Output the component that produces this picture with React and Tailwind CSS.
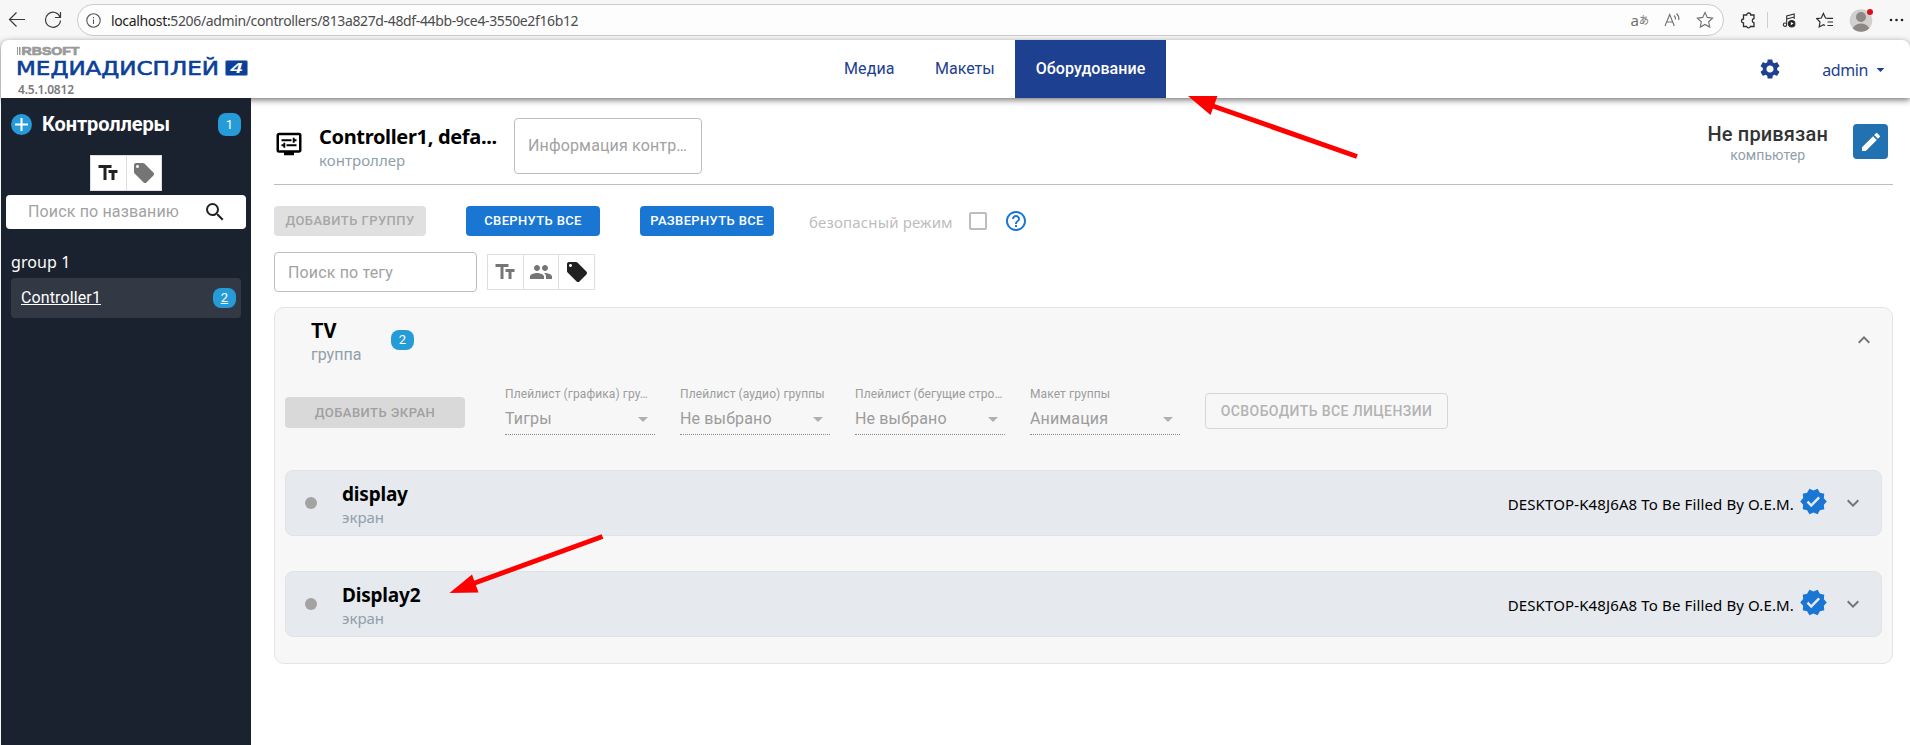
import { useState } from 'react'
import {
  MdTextFields, MdLocalOffer, MdPeople, MdSearch, MdHelpOutline, MdDisplaySettings,
  MdVerified, MdExpandMore, MdExpandLess, MdEdit, MdSettings, MdArrowDropDown,
} from 'react-icons/md'

const SEGOE = "font-['Noto_Sans','Open_Sans',sans-serif]"

const SCREENS = [
  { id: 1, name: 'display', pc: 'DESKTOP-K48J6A8 To Be Filled By O.E.M.' },
  { id: 2, name: 'Display2', pc: 'DESKTOP-K48J6A8 To Be Filled By O.E.M.' },
]

const SELECTS = [
  { label: 'Плейлист (графика) гру…', value: 'Тигры' },
  { label: 'Плейлист (аудио) группы', value: 'Не выбрано' },
  { label: 'Плейлист (бегущие стро…', value: 'Не выбрано' },
  { label: 'Макет группы', value: 'Анимация' },
]

function BrowserBar() {
  return (
    <div className={`h-10 shrink-0 bg-[#f7f7f7] flex items-start pt-1 text-[#3b3b3b] ${SEGOE}`}>
      <svg className="ml-2 mt-[7px] shrink-0" width="18" height="18" fill="none" stroke="currentColor" strokeWidth="1.2">
        <path d="M17 8.500H1.500M8.500 1.500 1.500 8.500l7 7" />
      </svg>
      <svg className="ml-[18px] mt-[7px] shrink-0" width="18" height="18" fill="none" stroke="currentColor" strokeWidth="1.2">
        <path d="M16.200 6.500A7.500 7.500 0 1 0 16.500 9.500M16.500 1v5.500h-5.500" />
      </svg>
      <div className="ml-[15px] w-[1647px] h-8 shrink-0 rounded-full border border-[#cbcbcb] bg-[#fdfdfd] flex items-center">
        <svg className="ml-2 shrink-0" width="15" height="15" fill="none" stroke="#555" strokeWidth="1.1">
          <circle cx="7.500" cy="7.500" r="6.700" />
          <path d="M7.500 6.500v4.500M7.500 4v1.300" />
        </svg>
        <span className="ml-2.5 text-[14px] tracking-[-0.36px] whitespace-nowrap">
          <span className="text-[#1c1c1c]">localhost:</span>
          <span className="text-[#4c4c4c]">5206/admin/controllers/813a827d-48df-44bb-9ce4-3550e2f16b12</span>
        </span>
        <span className="ml-auto mr-[13px] flex items-center text-[#707070]">
          <span className="text-[15px] leading-4">a</span>
          <span className="text-[10px] leading-4 font-['Noto_Sans_CJK_JP',sans-serif]">あ</span>
          <svg className="ml-[15px]" width="17" height="16" fill="none" stroke="currentColor" strokeWidth="1.1">
            <path d="M1 14 5.700 2.500 10.300 14M2.800 10h5.800M10 3.500q1.800 1.800 1.500 4M12.500 1.500q3 3 2.300 6.500" />
          </svg>
          <svg className="ml-[15px] -mr-1" width="18" height="18" fill="none" stroke="currentColor" strokeWidth="1.1">
            <path d="m9 1.500 2.300 4.900 5.300.7-3.900 3.700 1 5.300L9 13.500l-4.700 2.600 1-5.300L1.400 7.100l5.300-.7z" />
          </svg>
        </span>
      </div>
      <svg className="ml-4 mt-2 shrink-0" width="18" height="18" fill="none" stroke="#303030" strokeWidth="1.3">
        <path d="M3.500 3h3.200a2 2 0 0 1 4 0H14v3.500a2.200 2.200 0 0 0 0 4.300V14.500h-3.600a2 2 0 0 1-3.800 0H3.500v-3.500a2 2 0 0 1 0-4z" />
      </svg>
      <span className="ml-[9px] mt-2 h-4 w-px bg-[#cfcfcf]" />
      <svg className="ml-[14px] mt-2 shrink-0" width="17" height="17" fill="none" stroke="#303030" strokeWidth="1.1">
        <circle cx="3" cy="12.700" r="1.700" />
        <path d="M4.700 12.500V4l7.500-2v5M4.700 7l7.500-2" />
        <circle cx="9.700" cy="11.700" r="3.200" fill="#222" />
        <path d="m8.800 9.900 2.800 1.700-2.800 1.700z" fill="#fff" stroke="none" />
      </svg>
      <svg className="ml-[17px] mt-2 shrink-0" width="18" height="17" fill="none" stroke="#303030" strokeWidth="1.200">
        <path d="M12 6.300 9.500 6 7.400 1.500 5.300 6 .8 6.600 4 10l-.8 5 4.200-2.300 1.600.8M11 6.300h6M11.500 10h5.500M11.500 13.500h5.500" />
      </svg>
      <svg className="ml-[15px] mt-[3px] shrink-0" width="26" height="26">
        <defs>
          <clipPath id="avatar"><circle cx="12" cy="13.500" r="11.300" /></clipPath>
        </defs>
        <circle cx="12" cy="13.500" r="11.300" fill="#d2d0ce" />
        <circle cx="12" cy="10" r="5" fill="#8b8885" />
        <ellipse cx="12" cy="23" rx="8.500" ry="6.500" fill="#8b8885" clipPath="url(#avatar)" />
        <circle cx="21" cy="5" r="3" fill="#e00b1c" />
      </svg>
      <svg className="ml-[14px] mt-[14px] shrink-0" width="16" height="4" fill="#222">
        <circle cx="2" cy="2" r="1.300" /><circle cx="7.500" cy="2" r="1.300" /><circle cx="13" cy="2" r="1.300" />
      </svg>
    </div>
  )
}

function Logo() {
  return (
    <svg width="240" height="56" className="ml-[15px] shrink-0">
      <g fill="#9a9a9a">
        <rect x="1" y="6" width="1" height="8" />
        <rect x="3" y="6" width="1.500" height="8" />
        <text x="5.500" y="14" stroke="#9a9a9a" strokeWidth=".7" textLength="58" lengthAdjust="spacingAndGlyphs" className="font-['Liberation_Sans',sans-serif] text-[11.500px] font-bold">RBSOFT</text>
      </g>
      <text x="0" y="34" fill="#0b3f98" stroke="#0b3f98" strokeWidth=".6" textLength="203" lengthAdjust="spacingAndGlyphs" className="font-['DejaVu_Sans',sans-serif] text-[19.500px]">МЕДИАДИСПЛЕЙ</text>
      <rect x="209.500" y="19.500" width="22" height="15" rx="1.500" fill="#0b3f98" stroke="#7f9bcb" />
      <text x="214.500" y="32" fill="#fff" textLength="12" lengthAdjust="spacingAndGlyphs" className="font-['Liberation_Sans',sans-serif] text-[14px] font-bold italic">4</text>
      <text x="2" y="52.500" fill="#7b7b7b" textLength="56" className="font-['Noto_Sans',sans-serif] text-[12px] font-semibold">4.5.1.0812</text>
    </svg>
  )
}

function Header() {
  return (
    <header className="relative z-10 ml-px h-[58px] shrink-0 rounded-t-lg bg-white flex items-center shadow-[0_2px_6px_rgba(0,0,0,0.55)]">
      <Logo />
      <nav className="ml-[569px] h-full flex items-center text-[16px] text-[#1e4090]">
        <a className="w-[90px] pl-[19px] tracking-[0.1px]">Медиа</a>
        <a className="w-[100px] pl-5">Макеты</a>
        <a className="w-[151px] h-full flex items-center justify-center bg-[#1e4090] text-white font-medium tracking-[0.05px]">Оборудование</a>
      </nav>
      <MdSettings className="ml-auto text-[#1e4090]" size={24} />
      <button className={`ml-10 mr-5 pt-px flex items-center text-[16px] text-[#1e4090] ${SEGOE}`}>
        <span className="tracking-[-0.4px]">admin</span>
        <MdArrowDropDown className="ml-[3px]" size={19} />
      </button>
    </header>
  )
}

function Badge({ children, className = '' }) {
  return (
    <span className={`w-[23px] rounded-[8px] bg-[#259bd8] text-white text-[13px] flex items-center justify-center ${className}`}>
      {children}
    </span>
  )
}

function Sidebar() {
  return (
    <aside className="relative z-20 ml-px w-[250px] shrink-0 bg-[#1b222f] text-white">
      <div className="flex items-center pl-2.5 pr-2.5 pt-[15px]">
        <svg width="21" height="21" className="shrink-0">
          <circle cx="10.500" cy="10.500" r="10.500" fill="#259bd8" />
          <path d="M10.500 4v13M4 10.500h13" stroke="#fff" strokeWidth="2" />
        </svg>
        <h2 className="ml-2.5 text-[20px] leading-[23px] font-bold tracking-[-0.1px]">Контроллеры</h2>
        <Badge className="ml-auto h-[23px]">1</Badge>
      </div>
      <div className="mt-[19px] mx-auto w-[72px] h-9 flex bg-white border border-[#dedede]">
        <span className="flex-1 flex items-center justify-center border-r border-[#dedede] text-[#212121]"><MdTextFields size={24} /></span>
        <span className="flex-1 flex items-center justify-center text-[#757575]"><MdLocalOffer size={24} /></span>
      </div>
      <div className="mt-1 mx-[5px] h-[34px] rounded bg-white flex items-center pl-[22px] pr-[19px]">
        <span className="flex-1 text-[16px] text-[#a2a2a2] tracking-[0.15px]">Поиск по названию</span>
        <MdSearch className="text-[#222]" size={24} />
      </div>
      <p className={`mt-[21px] pl-2.5 text-[16px] leading-6 tracking-[0.1px] ${SEGOE}`}>group 1</p>
      <div className="mt-1 mx-2.5 h-10 rounded bg-[#323844] flex items-center pl-2.5 pr-[5px] underline">
        <span className="text-[16px] tracking-[0.12px] underline-offset-2">Controller1</span>
        <Badge className="ml-auto h-5 underline">2</Badge>
      </div>
    </aside>
  )
}

function ControllerBar() {
  return (
    <div className="h-[69px] border-b border-[#bdbdbd] flex">
      <MdDisplaySettings className="mt-[13px] text-black shrink-0" size={30} />
      <div className={`ml-[15px] mt-[7px] w-[180px] ${SEGOE}`}>
        <p className="text-[20px] leading-7 font-bold tracking-[-0.33px] text-black whitespace-nowrap">Controller1, defa...</p>
        <p className="text-[15px] leading-[19px] tracking-[0.05px] text-[#90a0aa]">контроллер</p>
      </div>
      <div className="ml-[15px] mt-[2px] w-[188px] h-14 rounded border border-[#bdbdbd] flex items-center pl-[13px] text-[16px] tracking-[0.15px] text-[#a2a2a2]">
        Информация контр…
      </div>
      <div className="ml-auto mt-[6px] text-center">
        <p className="text-[20px] leading-6 font-medium tracking-[0.15px] text-[#333]">Не привязан</p>
        <p className="text-[14px] leading-[18px] tracking-[0.05px] text-[#90a0aa]">компьютер</p>
      </div>
      <button className="ml-[25px] mr-[5px] mt-2 size-[35px] rounded bg-[#2271b1] text-white flex items-center justify-center">
        <MdEdit size={24} />
      </button>
    </div>
  )
}

function Toolbar({ safe, onSafe }) {
  return (
    <div className="mt-[21px] h-[30px] flex items-center text-[13px] font-medium">
      <button className="w-[152px] h-[30px] rounded bg-[#e0e0e0] text-[#a6a6a6] tracking-[0.46px]">ДОБАВИТЬ ГРУППУ</button>
      <button className="ml-10 w-[134px] h-[30px] rounded bg-[#1976d2] text-white tracking-[0.35px]">СВЕРНУТЬ ВСЕ</button>
      <button className="ml-10 w-[134px] h-[30px] rounded bg-[#1976d2] text-white tracking-[0.35px] whitespace-nowrap">РАЗВЕРНУТЬ ВСЕ</button>
      <span className={`ml-[35px] w-[143px] pt-0.5 text-[15px] font-normal tracking-[0.15px] text-[#bdbdbd] whitespace-nowrap ${SEGOE}`}>безопасный режим</span>
      <button onClick={onSafe} className={`ml-[17px] size-[18px] rounded-[2px] border-2 border-[#bdbdbd] ${safe ? 'bg-[#bdbdbd]' : ''}`} />
      <MdHelpOutline className="ml-[17px] text-[#1976d2]" size={24} />
    </div>
  )
}

function TagSearch() {
  return (
    <div className="mt-4 h-10 flex items-center">
      <div className="w-[203px] h-10 rounded border border-[#bdbdbd] flex items-center pl-[13px] pt-0.5 text-[16px] tracking-[0.15px] text-[#a2a2a2]">
        Поиск по тегу
      </div>
      <div className="ml-2.5 w-[108px] h-9 flex border border-[#dedede] text-[#757575]">
        <span className="flex-1 flex items-center justify-center border-r border-[#dedede]"><MdTextFields size={24} /></span>
        <span className="flex-1 flex items-center justify-center border-r border-[#dedede]"><MdPeople size={24} /></span>
        <span className="flex-1 flex items-center justify-center text-[#212121]"><MdLocalOffer size={24} /></span>
      </div>
    </div>
  )
}

function PlaylistSelect({ label, value }) {
  return (
    <div className="w-[150px] mr-[25px] text-[#9c9c9c] border-b border-dotted border-[#8c8c8c] h-[50px]">
      <p className="text-[12px] leading-[18px] tracking-[0.1px] whitespace-nowrap">{label}</p>
      <div className="mt-1 flex items-center justify-between">
        <span className="text-[16px] leading-6 tracking-[0.15px]">{value}</span>
        <MdArrowDropDown className="text-[#b0b0b0]" size={24} />
      </div>
    </div>
  )
}

function ScreenRow({ screen }) {
  return (
    <div className={`h-[66px] rounded-lg border border-[#e0e3e6] bg-[#e6e9ee] flex items-center pl-[19px] ${SEGOE}`}>
      <span className="size-3 rounded-full bg-[#a3a3a3]" />
      <div className="ml-[25px] pt-0.5">
        <p className="text-[19px] leading-[26px] font-bold tracking-[-0.2px] text-black">{screen.name}</p>
        <p className="text-[15px] leading-5 text-[#90a0aa]">экран</p>
      </div>
      <span className="ml-auto mt-[2px] text-[15px] tracking-[0.13px] text-black">{screen.pc}</span>
      <MdVerified className="ml-[5px] mb-1 text-[#1976d2]" size={29} />
      <MdExpandMore className="ml-[13px] mr-4 text-[#757575]" size={24} />
    </div>
  )
}

function GroupCard() {
  const [open, setOpen] = useState(true)

  return (
    <section className="mt-[15px] h-[357px] rounded-[10px] border border-[#e4e4e4] bg-[#f7f7f7] px-2.5">
      <div className="h-[63px] pl-[26px] flex items-center">
        <div className="w-20 pt-1">
          <p className="text-[20px] leading-[27px] font-bold text-black">TV</p>
          <p className="text-[16px] leading-5 text-[#90a0aa]">группа</p>
        </div>
        <Badge className="h-5">2</Badge>
        <button onClick={() => setOpen(!open)} className="ml-auto mr-[6px] text-[#757575]">
          {open ? <MdExpandLess size={24} /> : <MdExpandMore size={24} />}
        </button>
      </div>
      {open && (
        <>
          <div className="mt-[14px] flex items-start">
            <button className="mt-3 mr-10 w-[180px] h-[31px] rounded bg-[#d9d9d9] text-[#a0a0a0] text-[13px] font-medium tracking-[0.46px]">ДОБАВИТЬ ЭКРАН</button>
            {SELECTS.map(s => <PlaylistSelect key={s.label} {...s} />)}
            <button className="mt-2 w-[243px] h-9 rounded border border-[#d6d6d6] text-[#b3b3b3] text-[14px] font-medium tracking-[0.4px]">ОСВОБОДИТЬ ВСЕ ЛИЦЕНЗИИ</button>
          </div>
          <div className="mt-[35px] flex flex-col gap-[35px]">
            {SCREENS.map(s => <ScreenRow key={s.id} screen={s} />)}
          </div>
        </>
      )}
    </section>
  )
}

// red pointers drawn over the page
function Arrows() {
  return (
    <svg className="absolute inset-0 z-30 pointer-events-none" width="1910" height="745" fill="#fe0000" stroke="#fe0000">
      <path d="M1357 156.500 1210 105" strokeWidth="5" />
      <path d="M1188 96h29.500l-7 19z" stroke="none" />
      <path d="M602.500 536.500 472 584" strokeWidth="5" />
      <path d="m449.500 593 22.500-18.500 6.500 18z" stroke="none" />
    </svg>
  )
}

export default function App() {
  const [safe, setSafe] = useState(false)

  return (
    <div className="relative w-[1910px] h-[745px] overflow-hidden bg-[#f7f7f7] flex flex-col font-['Roboto',sans-serif]">
      <BrowserBar />
      <Header />
      <div className="flex-1 min-h-0 flex">
        <Sidebar />
        <main className="flex-1 bg-white pl-[23px] pr-[17px] pt-[18px]">
          <ControllerBar />
          <Toolbar safe={safe} onSafe={() => setSafe(!safe)} />
          <TagSearch />
          <GroupCard />
        </main>
      </div>
      <Arrows />
    </div>
  )
}
